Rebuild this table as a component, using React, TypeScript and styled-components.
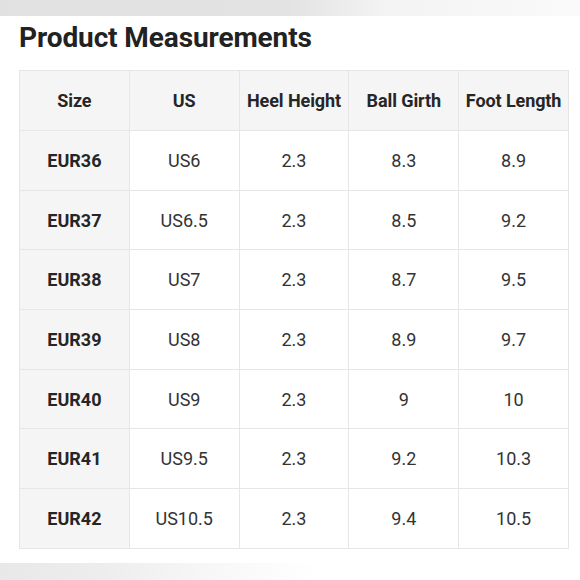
import React from 'react'
import styled, { createGlobalStyle } from 'styled-components'

const GlobalStyle = createGlobalStyle`
  html, body {
    margin: 0;
    padding: 0;
    background: #fff;
    font-family: Roboto, "Liberation Sans", sans-serif;
  }
`

const Page = styled.div`
  width: 580px;
  height: 580px;
  display: flex;
  flex-direction: column;
  overflow: hidden;
`

const TopShade = styled.div`
  height: 16px;
  flex: none;
  background: linear-gradient(90deg, #e1e1e1 0%, #e3e3e3 50%, #f3f3f3 66%, #fafafa 100%);
`

const Title = styled.h2`
  margin: 5px 0 0 19px;
  font-size: 28px;
  line-height: 34px;
  font-weight: 700;
  color: #222;
  letter-spacing: -0.1px;
`

const Table = styled.table`
  margin: 15px 0 0 19px;
  width: 550px;
  border-collapse: collapse;
  table-layout: fixed;
`

const HeadCell = styled.th`
  height: 59px;
  padding: 0;
  background: #f5f5f5;
  border: 1px solid #e6e6e6;
  font-size: 18px;
  font-weight: 700;
  color: #262626;
  text-align: center;
  white-space: nowrap;
  letter-spacing: -0.1px;
`

const Cell = styled.td<{ $key?: boolean }>`
  height: 58.7px;
  padding: 0;
  border: 1px solid #e6e6e6;
  background: ${p => (p.$key ? '#f5f5f5' : '#fff')};
  font-size: 18px;
  font-weight: ${p => (p.$key ? 700 : 400)};
  color: ${p => (p.$key ? '#262626' : '#333')};
  text-align: center;
`

const BottomShade = styled.div`
  margin-top: auto;
  height: 17px;
  flex: none;
  background: linear-gradient(90deg, #e8e8e8 0%, #ededed 18%, #f7f7f7 36%, #fff 55%);
`

const headers = ['Size', 'US', 'Heel Height', 'Ball Girth', 'Foot Length']

const rows = [
  ['EUR36', 'US6', '2.3', '8.3', '8.9'],
  ['EUR37', 'US6.5', '2.3', '8.5', '9.2'],
  ['EUR38', 'US7', '2.3', '8.7', '9.5'],
  ['EUR39', 'US8', '2.3', '8.9', '9.7'],
  ['EUR40', 'US9', '2.3', '9', '10'],
  ['EUR41', 'US9.5', '2.3', '9.2', '10.3'],
  ['EUR42', 'US10.5', '2.3', '9.4', '10.5']
]

export default function App() {
  return (
    <>
      <GlobalStyle />
      <Page>
        <TopShade />
        <Title>Product Measurements</Title>
        <Table>
          <thead>
            <tr>
              {headers.map(h => (
                <HeadCell key={h}>{h}</HeadCell>
              ))}
            </tr>
          </thead>
          <tbody>
            {rows.map(r => (
              <tr key={r[0]}>
                {r.map((v, i) => (
                  <Cell key={i} $key={i === 0}>{v}</Cell>
                ))}
              </tr>
            ))}
          </tbody>
        </Table>
        <BottomShade />
      </Page>
    </>
  )
}
